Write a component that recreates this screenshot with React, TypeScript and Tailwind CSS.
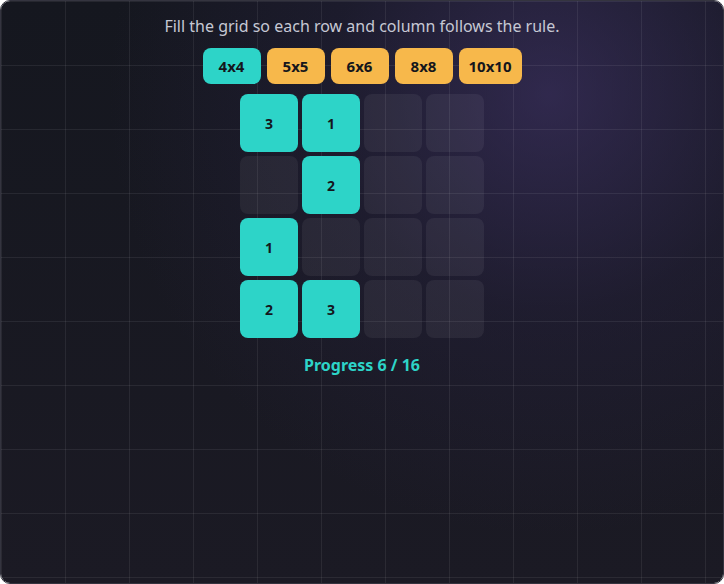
import React, { useState } from 'react';

const SIZES = ['4x4', '5x5', '6x6', '8x8', '10x10'];

// 0 = empty, otherwise the placed number
const BOARD: number[][] = [
  [3, 1, 0, 0],
  [0, 2, 0, 0],
  [1, 0, 0, 0],
  [2, 3, 0, 0],
];

export default function App() {
  const [size, setSize] = useState('4x4');
  const filled = BOARD.flat().filter(v => v > 0).length;
  const total = BOARD.flat().length;

  return (
    <div
      className="w-[724px] h-[584px] overflow-hidden rounded-[10px] border border-[#34343f] relative"
      style={{ fontFamily: '"Noto Sans", "Open Sans", sans-serif' }}
    >
      {/* backdrop: dark base, purple glow top-right, faint 64px grid */}
      <div className="absolute inset-0 bg-[linear-gradient(180deg,#15171f_0%,#1b1a24_100%)]" />
      <div className="absolute inset-0 bg-[radial-gradient(circle_at_76%_16%,rgba(70,55,115,0.55)_0%,rgba(50,40,85,0.25)_30%,transparent_60%)]" />
      <div className="absolute inset-0 bg-[linear-gradient(to_right,rgba(255,255,255,0.07)_1px,transparent_1px),linear-gradient(to_bottom,rgba(255,255,255,0.07)_1px,transparent_1px)] bg-[size:64px_64px]" />

      <div className="relative flex flex-col items-center pt-[14px]">
        <p className="text-[16px] leading-[22px] text-[#c6c8d4]">Fill the grid so each row and column follows the rule.</p>

        <div className="flex gap-[6px] mt-[11px]">
          {SIZES.map(s => (
            <button
              key={s}
              onClick={() => setSize(s)}
              className={`h-[36px] px-[10px] min-w-[58px] rounded-[8px] text-[15px] font-bold text-[#15161c] ${s === size ? 'bg-[#2dd4c8]' : 'bg-[#f7b84b]'}`}
            >
              {s}
            </button>
          ))}
        </div>

        <div className="grid grid-cols-[repeat(4,58px)] gap-[4px] mt-[10px]">
          {BOARD.flat().map((v, i) => (
            <div
              key={i}
              className={`h-[58px] rounded-[8px] flex items-center justify-center text-[14px] font-bold text-[#15161c] ${v ? 'bg-[#2dd4c8]' : 'bg-white/[0.06]'}`}
            >
              {v || ''}
            </div>
          ))}
        </div>

        <p className="mt-[15px] text-[16px] font-bold text-[#2dd4c8]">Progress {filled} / {total}</p>
      </div>
    </div>
  );
}
